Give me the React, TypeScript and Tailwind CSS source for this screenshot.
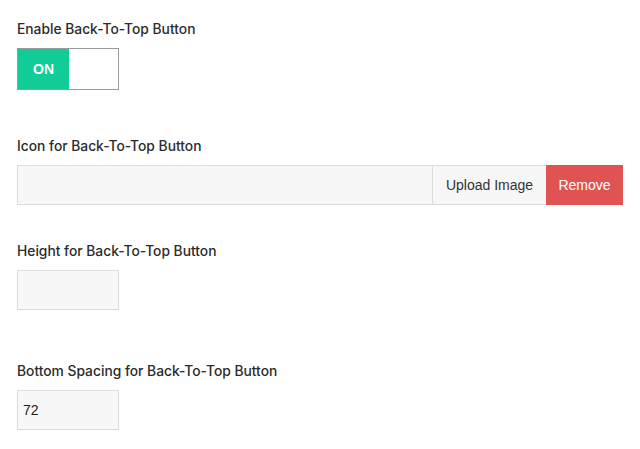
import React from "react";

const font = { fontFamily: '"Liberation Sans", Arial, sans-serif' };

function Label({ children }: { children: React.ReactNode }) {
  return (
    <div className="text-[13.8px] leading-[18px] font-medium text-[#2b2b2b]" style={{ fontFamily: 'Inter, "Liberation Sans", Arial, sans-serif' }}>
      {children}
    </div>
  );
}

export default function App() {
  return (
    <div className="w-[640px] h-[449px] bg-white pl-[17px] pr-[17px] pt-[20px]" style={font}>
      <Label>Enable Back-To-Top Button</Label>
      <div className="mt-[10px] flex w-[102px] h-[42px] border border-[#9a9a9a]">
        <div className="w-[51px] h-full bg-[#12cc97] flex items-center justify-center text-white text-[14px] font-bold">
          ON
        </div>
        <div className="flex-1 bg-white" />
      </div>

      <div className="mt-[47px]">
        <Label>Icon for Back-To-Top Button</Label>
      </div>
      <div className="mt-[10px] flex w-[606px] h-[40px] border border-[#dddddd] bg-[#f7f7f7]">
        <div className="flex-1" />
        <div className="w-[114px] border-l border-[#dddddd] flex items-center justify-center text-[14px] text-[#333]">
          Upload Image
        </div>
        <div className="w-[77px] -my-px -mr-px bg-[#df5353] flex items-center justify-center text-[14px] text-white">
          Remove
        </div>
      </div>

      <div className="mt-[37px]">
        <Label>Height for Back-To-Top Button</Label>
      </div>
      <div className="mt-[10px] w-[102px] h-[40px] border border-[#dddddd] bg-[#f7f7f7]" />

      <div className="mt-[52px]">
        <Label>Bottom Spacing for Back-To-Top Button</Label>
      </div>
      <div className="mt-[10px] w-[102px] h-[40px] border border-[#dddddd] bg-[#f7f7f7] flex items-center pl-[5px] text-[14px] text-[#222]">
        72
      </div>
    </div>
  );
}
